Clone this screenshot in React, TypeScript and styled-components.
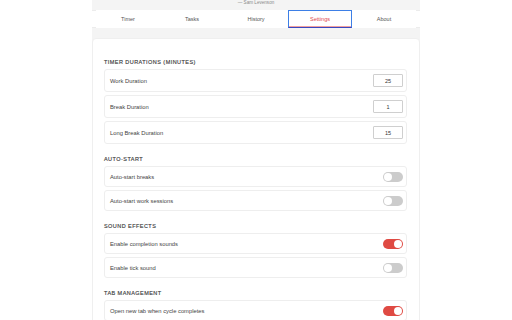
import React, { useState } from "react";
import styled, { createGlobalStyle } from "styled-components";

const Global = createGlobalStyle`
  html, body { margin: 0; padding: 0; background: #ffffff; }
  body { font-family: "Liberation Sans", Arial, sans-serif; }
  * { box-sizing: border-box; }
`;

const Container = styled.div`
  width: 328px;
  margin: 0 auto;
  background: #f4f4f4;
  min-height: 320px;
  display: flex;
  flex-direction: column;
`;

const Quote = styled.div`
  height: 10px;
  font-size: 4.6px;
  line-height: 5px;
  color: #8a8a8a;
  text-align: center;
`;

const TabBar = styled.nav`
  height: 18px;
  background: #ffffff;
  border-top: 1px solid #ececec;
  border-bottom: 1px solid #ececec;
  display: flex;
  padding: 0 4px;
`;

const Tab = styled.button<{ $active?: boolean }>`
  flex: 1;
  margin: -1px 0;
  height: 18px;
  background: #ffffff;
  border: 1px solid ${(p) => (p.$active ? "#3d7fe6" : "transparent")};
  box-shadow: ${(p) => (p.$active ? "inset 0 -1px 0 #f0a0a0" : "none")};
  border-bottom-color: ${(p) => (p.$active ? "#3a48c0" : "transparent")};
  font-family: "Liberation Sans", Arial, sans-serif;
  font-size: 5.5px;
  color: ${(p) => (p.$active ? "#e0474c" : "#555555")};
  padding: 0;
  cursor: pointer;
`;

const Gap = styled.div`
  height: 10px;
`;

const Card = styled.div`
  flex: 1;
  background: #ffffff;
  border: 1px solid #efefef;
  border-radius: 4px;
  padding: 19px 12px 20px 11px;
`;

const Section = styled.section`
  & + & {
    margin-top: 11px;
  }
`;

const SectionTitle = styled.h3`
  margin: 0 0 3px 0;
  font-size: 5.5px;
  line-height: 8px;
  font-weight: 400;
  letter-spacing: 0.45px;
  color: #3c3c3c;
  text-transform: uppercase;
  -webkit-text-stroke: 0.15px #3c3c3c;
`;

const Rows = styled.div`
  display: flex;
  flex-direction: column;
  gap: 3px;
`;

const Row = styled.div<{ $tall?: boolean }>`
  height: ${(p) => (p.$tall ? 23 : 21)}px;
  border: 1px solid #eeeeee;
  border-radius: 3px;
  display: flex;
  align-items: center;
  justify-content: space-between;
  padding: 0 3px 0 5px;
`;

const Label = styled.span`
  font-size: 5.8px;
  color: #444444;
`;

const NumInput = styled.input`
  width: 30px;
  height: 13px;
  border: 1px solid #cfcfcf;
  border-radius: 1px;
  font-family: "Liberation Sans", Arial, sans-serif;
  font-size: 5.5px;
  color: #333;
  text-align: center;
  padding: 0;
  outline: none;
`;

const Toggle = styled.button<{ $on: boolean }>`
  width: 20px;
  height: 10px;
  border-radius: 5px;
  border: none;
  padding: 1px;
  background: ${(p) => (p.$on ? "#df4a43" : "#cccccc")};
  display: flex;
  justify-content: ${(p) => (p.$on ? "flex-end" : "flex-start")};
  align-items: center;
  cursor: pointer;
`;

const Knob = styled.span`
  width: 8px;
  height: 8px;
  border-radius: 50%;
  background: #ffffff;
`;

const tabs = ["Timer", "Tasks", "History", "Settings", "About"];

type ToggleItem = { label: string; on: boolean };

const sections: { title: string; items: ToggleItem[] }[] = [
  {
    title: "Auto-start",
    items: [
      { label: "Auto-start breaks", on: false },
      { label: "Auto-start work sessions", on: false },
    ],
  },
  {
    title: "Sound Effects",
    items: [
      { label: "Enable completion sounds", on: true },
      { label: "Enable tick sound", on: false },
    ],
  },
  {
    title: "Tab Management",
    items: [{ label: "Open new tab when cycle completes", on: true }],
  },
];

export default function App() {
  const [toggles, setToggles] = useState(
    sections.map((s) => s.items.map((i) => i.on))
  );
  const durations = [
    { label: "Work Duration", value: 25 },
    { label: "Break Duration", value: 1 },
    { label: "Long Break Duration", value: 15 },
  ];
  return (
    <>
      <Global />
      <Container>
        <Quote>— Sam Levenson</Quote>
        <TabBar>
          {tabs.map((t) => (
            <Tab key={t} $active={t === "Settings"}>
              {t}
            </Tab>
          ))}
        </TabBar>
        <Gap />
        <Card>
          <Section>
            <SectionTitle>Timer Durations (minutes)</SectionTitle>
            <Rows>
              {durations.map((d) => (
                <Row key={d.label} $tall>
                  <Label>{d.label}</Label>
                  <NumInput type="text" defaultValue={d.value} />
                </Row>
              ))}
            </Rows>
          </Section>
          {sections.map((s, si) => (
            <Section key={s.title}>
              <SectionTitle>{s.title}</SectionTitle>
              <Rows>
                {s.items.map((it, ii) => (
                  <Row key={it.label}>
                    <Label>{it.label}</Label>
                    <Toggle
                      $on={toggles[si][ii]}
                      onClick={() =>
                        setToggles((prev) =>
                          prev.map((arr, a) =>
                            a === si ? arr.map((v, b) => (b === ii ? !v : v)) : arr
                          )
                        )
                      }
                    >
                      <Knob />
                    </Toggle>
                  </Row>
                ))}
              </Rows>
            </Section>
          ))}
        </Card>
      </Container>
    </>
  );
}
